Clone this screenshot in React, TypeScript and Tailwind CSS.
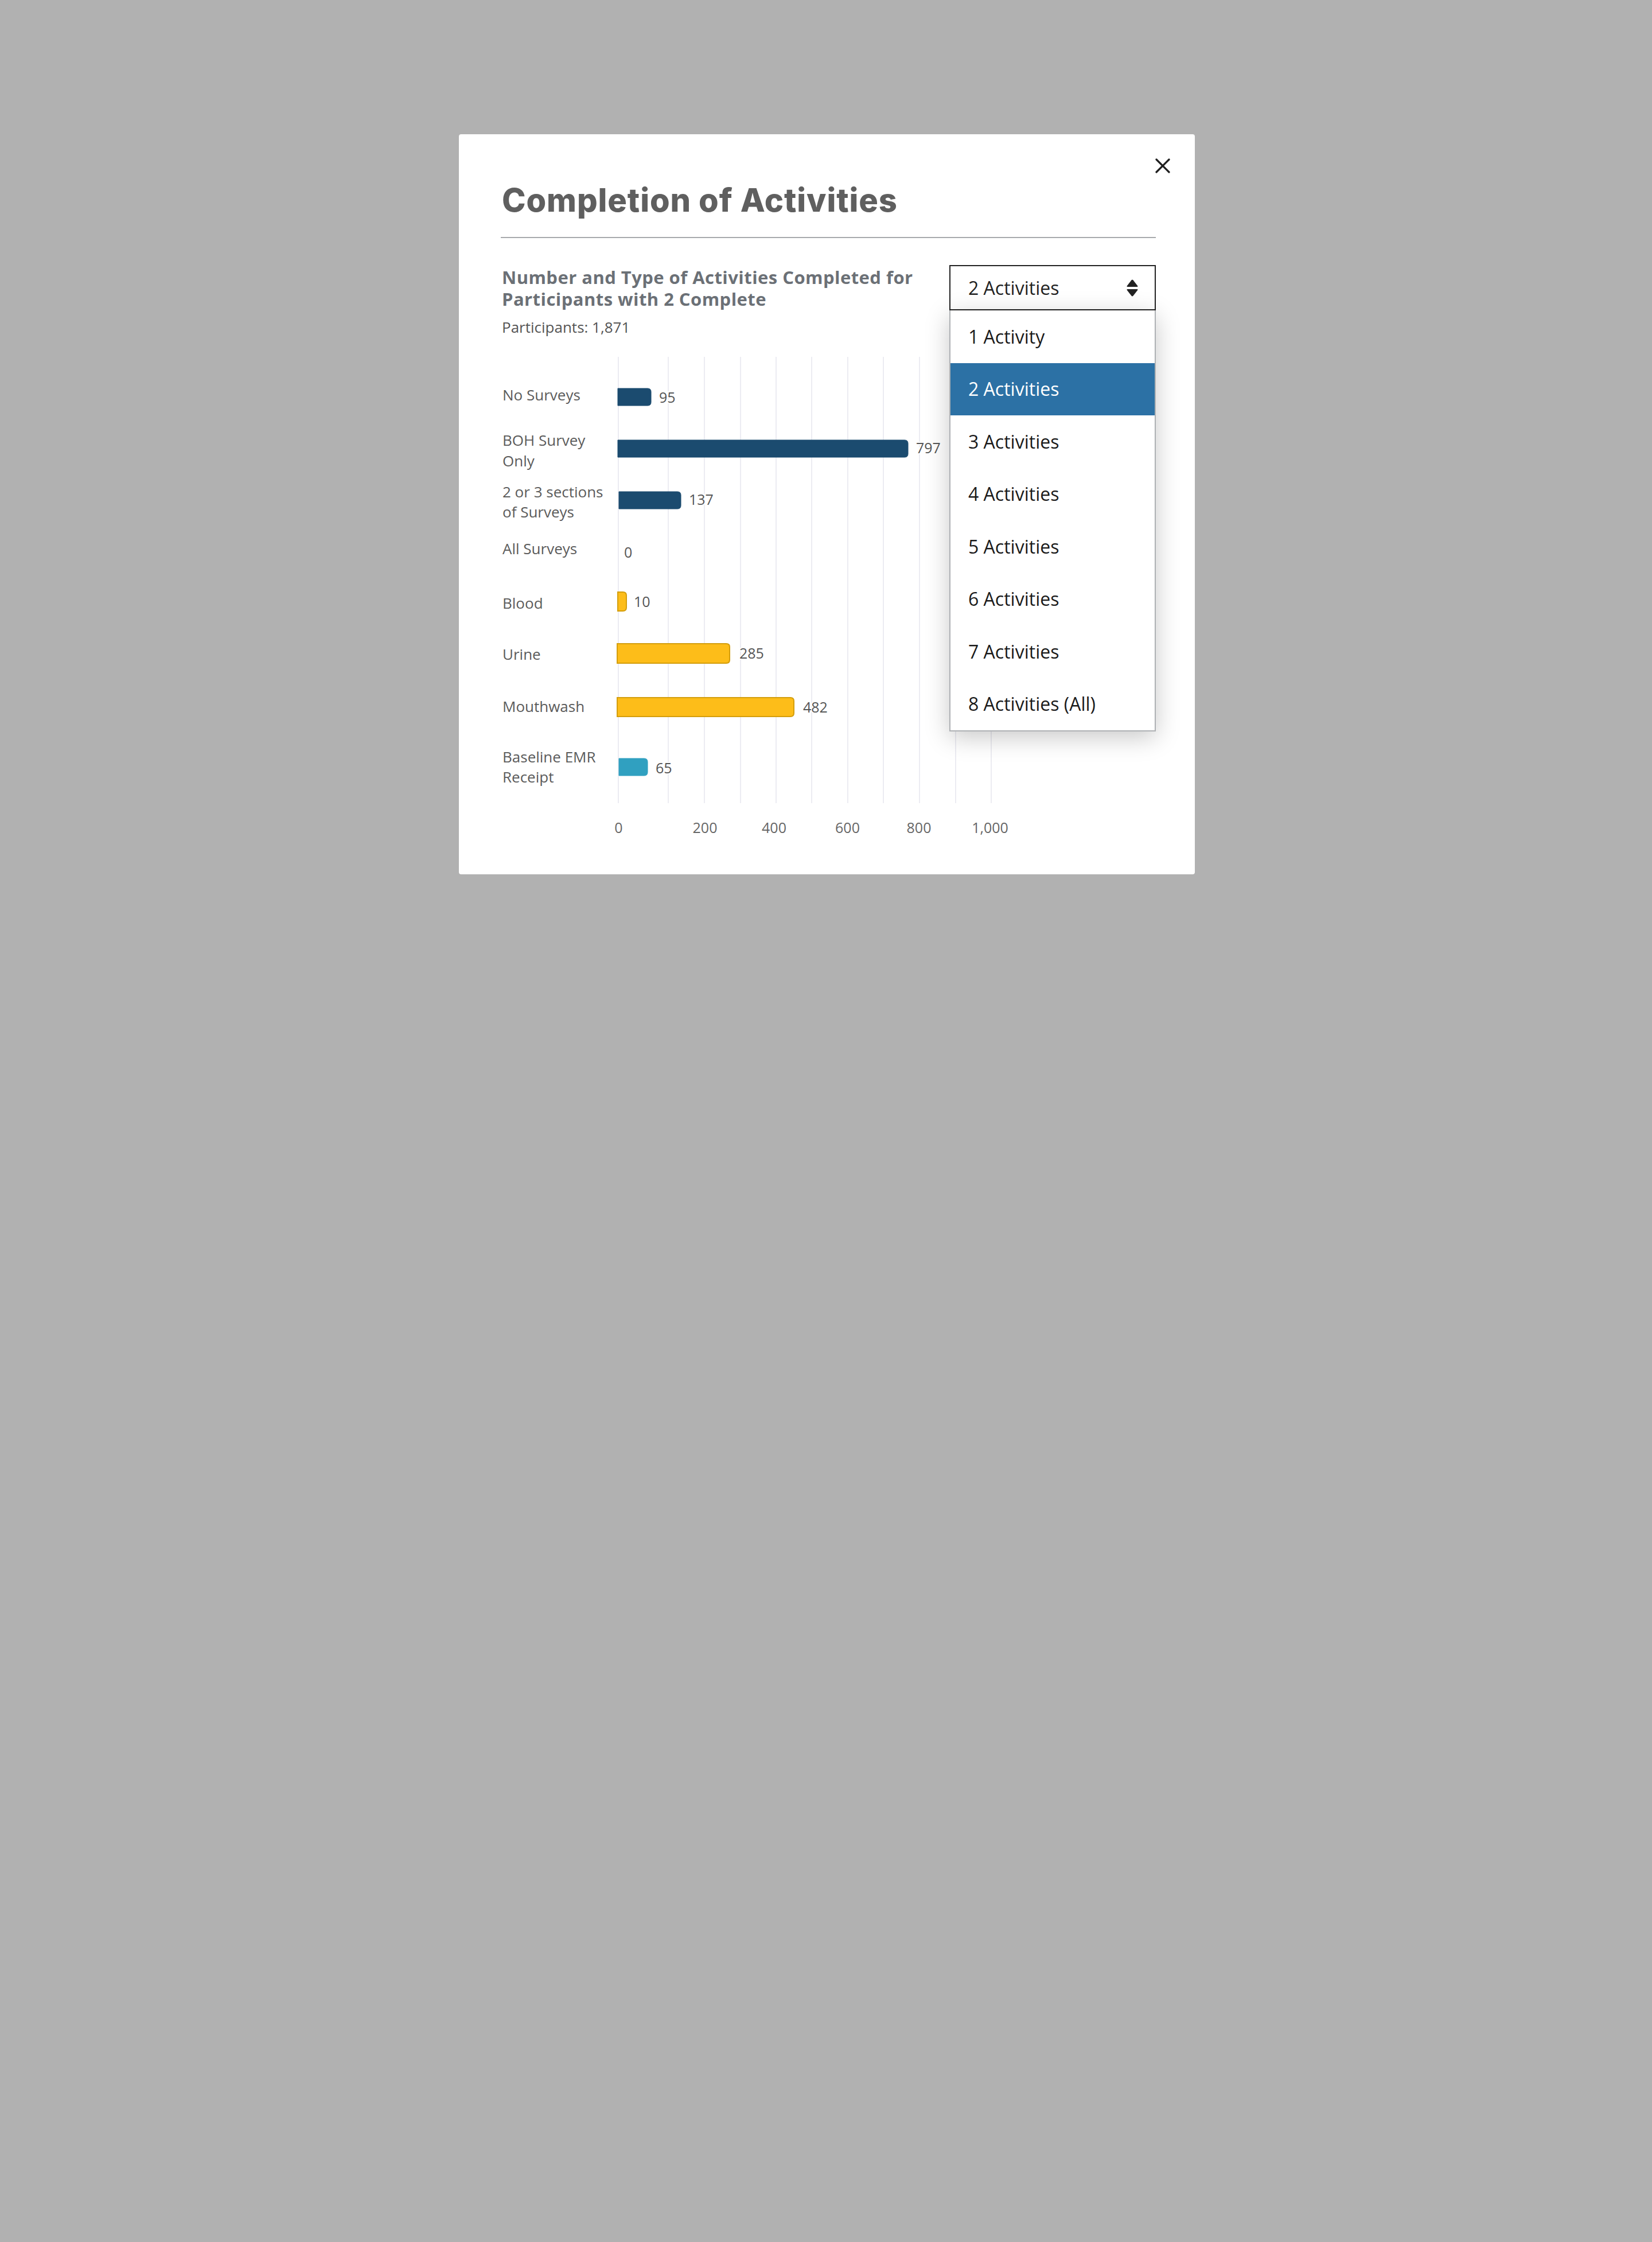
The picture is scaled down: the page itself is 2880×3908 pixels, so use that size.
import React from 'react';

const options = [
  '1 Activity',
  '2 Activities',
  '3 Activities',
  '4 Activities',
  '5 Activities',
  '6 Activities',
  '7 Activities',
  '8 Activities (All)',
];

type Row = {
  label: string[];
  labelY: number[];
  x: number;
  y: number;
  w: number;
  h: number;
  value: string;
  vx: number;
  vy: number;
  kind: 'survey' | 'sample' | 'emr';
};

// chart coordinates are relative to the top-left of the svg
const rows: Row[] = [
  { label: ['No Surveys'], labelY: [98], x: 202, y: 77, w: 58, h: 30, value: '95', vx: 274, vy: 102, kind: 'survey' },
  { label: ['BOH Survey', 'Only'], labelY: [177, 213], x: 202, y: 167, w: 506, h: 30, value: '797', vx: 722, vy: 190, kind: 'survey' },
  { label: ['2 or 3 sections', 'of Surveys'], labelY: [267, 302], x: 204, y: 257, w: 108, h: 30, value: '137', vx: 326, vy: 280, kind: 'survey' },
  { label: ['All Surveys'], labelY: [366], x: 202, y: 347, w: 0, h: 30, value: '0', vx: 213, vy: 372, kind: 'survey' },
  { label: ['Blood'], labelY: [461], x: 202, y: 432, w: 15, h: 33, value: '10', vx: 230, vy: 458, kind: 'sample' },
  { label: ['Urine'], labelY: [550], x: 201, y: 522, w: 196, h: 34, value: '285', vx: 414, vy: 548, kind: 'sample' },
  { label: ['Mouthwash'], labelY: [641], x: 201, y: 616, w: 308, h: 33, value: '482', vx: 525, vy: 642, kind: 'sample' },
  { label: ['Baseline EMR', 'Receipt'], labelY: [729, 764], x: 204, y: 722, w: 50, h: 30, value: '65', vx: 268, vy: 748, kind: 'emr' },
];

const gridX = [203, 290, 353, 416, 478, 540, 603, 665, 728, 791, 853];
const ticks = [
  { x: 203.5, t: '0' },
  { x: 354, t: '200' },
  { x: 474.5, t: '400' },
  { x: 602.5, t: '600' },
  { x: 727, t: '800' },
  { x: 851, t: '1,000' },
];

const barPath = (x: number, y: number, w: number, h: number, r: number) => {
  const rr = Math.min(r, w / 2);
  return `M${x} ${y} H${x + w - rr} Q${x + w} ${y} ${x + w} ${y + rr} V${y + h - rr} Q${x + w} ${y + h} ${x + w - rr} ${y + h} H${x} Z`;
};

const fills = {
  survey: { fill: '#1b4b6f', stroke: '#1b4b6f' },
  sample: { fill: '#fdbd19', stroke: '#d49e0c' },
  emr: { fill: '#30a0c0', stroke: '#30a0c0' },
};

function ActivitiesChart() {
  return (
    <svg width="900" height="870" viewBox="0 0 900 870" className="block font-['Open_Sans',sans-serif]">
      {gridX.map((x) => (
        <line key={x} x1={x} x2={x} y1={22} y2={800} stroke="#e6e6ee" strokeWidth={1.5} />
      ))}

      {rows.map((r) => (
        <g key={r.label.join(' ')}>
          {r.label.map((l, i) => (
            <text key={l} x={1} y={r.labelY[i]} fontSize={26} fill="#5b5b5b">
              {l}
            </text>
          ))}
          {r.w > 0 && (
            <path
              d={barPath(r.x, r.y, r.w, r.h, 6)}
              fill={fills[r.kind].fill}
              stroke={fills[r.kind].stroke}
              strokeWidth={r.kind === 'sample' ? 2 : 1}
            />
          )}
          <text
            x={r.vx}
            y={r.vy}
            fontSize={25}
            fill="#555"
            stroke="#fff"
            strokeWidth={4}
            paintOrder="stroke"
          >
            {r.value}
          </text>
        </g>
      ))}

      {ticks.map((t) => (
        <text key={t.t} x={t.x} y={852} fontSize={25} fill="#666" textAnchor="middle">
          {t.t}
        </text>
      ))}
    </svg>
  );
}

function SortIcon() {
  return (
    <svg width="20" height="30" viewBox="0 0 20 30" fill="#222">
      <path d="M8.6 1.2 Q10 -0.4 11.4 1.2 L19.2 11.2 Q20.2 13 18.2 13 H1.8 Q-0.2 13 0.8 11.2 Z" />
      <path d="M1.8 17 H18.2 Q20.2 17 19.2 18.8 L11.4 28.8 Q10 30.4 8.6 28.8 L0.8 18.8 Q-0.2 17 1.8 17 Z" />
    </svg>
  );
}

export default function App() {
  const selected = '2 Activities';

  return (
    <div className="min-h-[3908px] w-full bg-[#b1b1b1] pt-[234px] font-['Open_Sans',sans-serif]">
      <div className="relative ml-[800px] h-[1290px] w-[1283px] rounded-[4px] bg-white pl-[75px] pr-[68px] pt-[88px]">
        {/* Close */}
        <button className="absolute right-[43px] top-[42px] h-[26px] w-[26px]">
          <svg width="26" height="26" viewBox="0 0 26 26" stroke="#1f1f1f" strokeWidth={3.2} strokeLinecap="round">
            <line x1="2" y1="2" x2="24" y2="24" />
            <line x1="24" y1="2" x2="2" y2="24" />
          </svg>
        </button>

        <h1 className="font-['Inter',sans-serif] text-[56px] font-extrabold leading-[55px] tracking-[0.9px] text-[#5f5f5f]">
          Completion of Activities
        </h1>
        <div className="-ml-[2px] mt-[36px] h-[2px] bg-[#a7aaad]" />

        {/* Header row */}
        <div className="mt-[47px] flex items-start justify-between gap-6">
          <div className="flex-1 pt-[2px]">
            <h2 className="max-w-[760px] text-[31px] font-bold leading-[38px] tracking-[0.45px] text-[#6b7076]">
              Number and Type of Activities Completed for Participants with 2 Complete
            </h2>
            <p className="mt-[13px] text-[26px] leading-[34px] text-[#555]">Participants: 1,871</p>
          </div>

          <div className="relative w-[360px]">
            <div className="flex h-[79px] items-center justify-between border-2 border-[#222] bg-white pl-[31px] pr-[29px]">
              <span className="text-[32px] text-[#222]">{selected}</span>
              <SortIcon />
            </div>
            <ul className="absolute left-0 top-full z-10 w-full border-2 border-t-0 border-[#aeb1b4] bg-white shadow-[0_10px_40px_rgba(0,0,0,0.22)]">
              {options.map((o) => (
                <li
                  key={o}
                  className={`flex h-[91.5px] items-center pl-[31px] text-[32px] ${
                    o === selected ? 'bg-[#2c71a5] text-white' : 'text-[#1a1a1a]'
                  }`}
                >
                  {o}
                </li>
              ))}
            </ul>
          </div>
        </div>

        <div className="mt-[13px]">
          <ActivitiesChart />
        </div>
      </div>
    </div>
  );
}
